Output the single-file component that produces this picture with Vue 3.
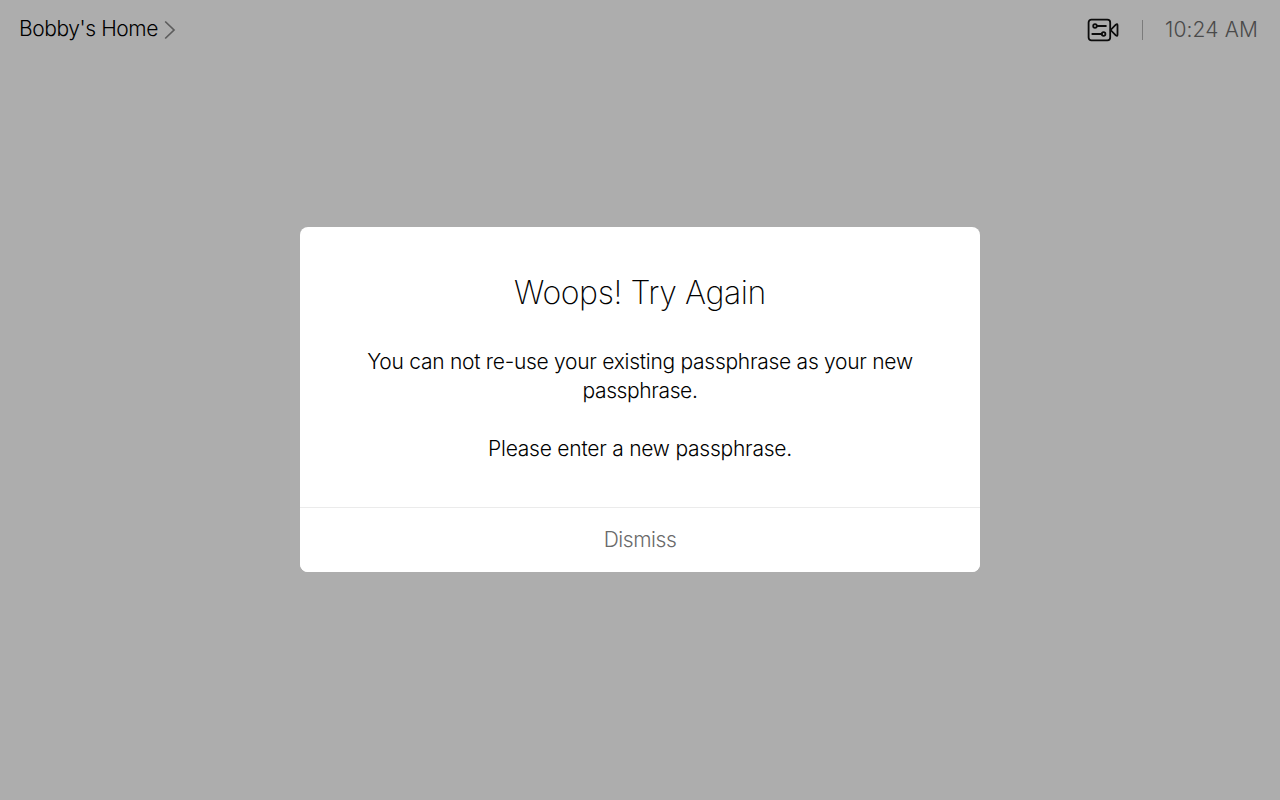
<script setup>
const message = ['You can not re-use your existing passphrase as your new', 'passphrase.']
</script>

<template>
  <div class="screen">
    <header class="bar">
      <div class="home">
        <span class="home-name">Bobby's Home</span>
        <svg class="chevron" width="12" height="20" viewBox="0 0 12 20"><path d="M1.2 1.5 10 10 1.2 18.5" /></svg>
      </div>
      <div class="status">
        <svg class="camera" width="32" height="24" viewBox="0 0 32 24">
          <rect x="1.6" y="1.6" width="21.6" height="20.8" rx="2.8" />
          <path d="M23.6 12 28.8 6.6Q30.5 5.3 30.5 7.2V16.8Q30.5 18.7 28.8 17.4ZM9.9 8H18.9M5.3 16H14.8" />
          <circle cx="8" cy="8" r="1.8" />
          <circle cx="16.6" cy="16" r="1.8" />
        </svg>
        <i class="divider"></i>
        <span class="time">10:24 AM</span>
      </div>
    </header>
    <main class="stage">
      <section class="dialog" role="dialog">
        <div class="content">
          <h1>Woops! Try Again</h1>
          <p>{{ message[0] }}<br /><span class="last-word">{{ message[1] }}</span></p>
          <p class="second">Please enter a new passphrase.</p>
        </div>
        <button type="button">Dismiss</button>
      </section>
    </main>
  </div>
</template>

<style>
body { margin: 0; background: #adadad; }
</style>

<style scoped>
.screen { position: relative; width: 1280px; height: 800px; overflow: hidden; background: #adadad; font-family: Inter, "Liberation Sans", sans-serif; font-weight: 300; color: #000; display: flex; flex-direction: column; }
.bar { height: 60px; box-sizing: border-box; padding: 0 21px 0 19px; display: flex; justify-content: space-between; align-items: center; font-size: 21px; line-height: 28px; white-space: nowrap; }
.home, .status { display: flex; align-items: center; }
.home-name { width: 139px; margin-top: -2px; letter-spacing: -0.42px; }
.chevron { margin-left: 6px; fill: none; stroke: #5c5c5c; stroke-width: 1.7; }
.camera { fill: none; stroke: #0c0c0c; stroke-width: 1.8; stroke-linejoin: round; stroke-linecap: round; }
.divider { width: 1px; height: 20px; margin-left: 23px; background: #7b7b7b; }
.time { width: 94px; margin-left: 22px; color: #4a4a4a; letter-spacing: 0.15px; }
.stage { display: flex; justify-content: center; padding-top: 167px; }
.dialog { width: 680px; height: 345px; background: #fff; border-radius: 8px; overflow: hidden; display: flex; flex-direction: column; text-align: center; }
.content { flex: 1; }
h1 { margin: 46px 0 0; font-size: 32px; line-height: 40px; font-weight: 250; letter-spacing: -0.4px; }
p { margin: 34px 0 0; font-size: 21px; line-height: 29px; white-space: nowrap; letter-spacing: -0.27px; }
.last-word { letter-spacing: -0.38px; }
.second { margin-top: 29px; letter-spacing: -0.23px; }
button { height: 65px; border: 0; border-top: 1px solid #ebebeb; background: #fff; padding: 0 0 2px; font: inherit; font-size: 21px; letter-spacing: -0.45px; color: #6a6a6a; }
</style>
